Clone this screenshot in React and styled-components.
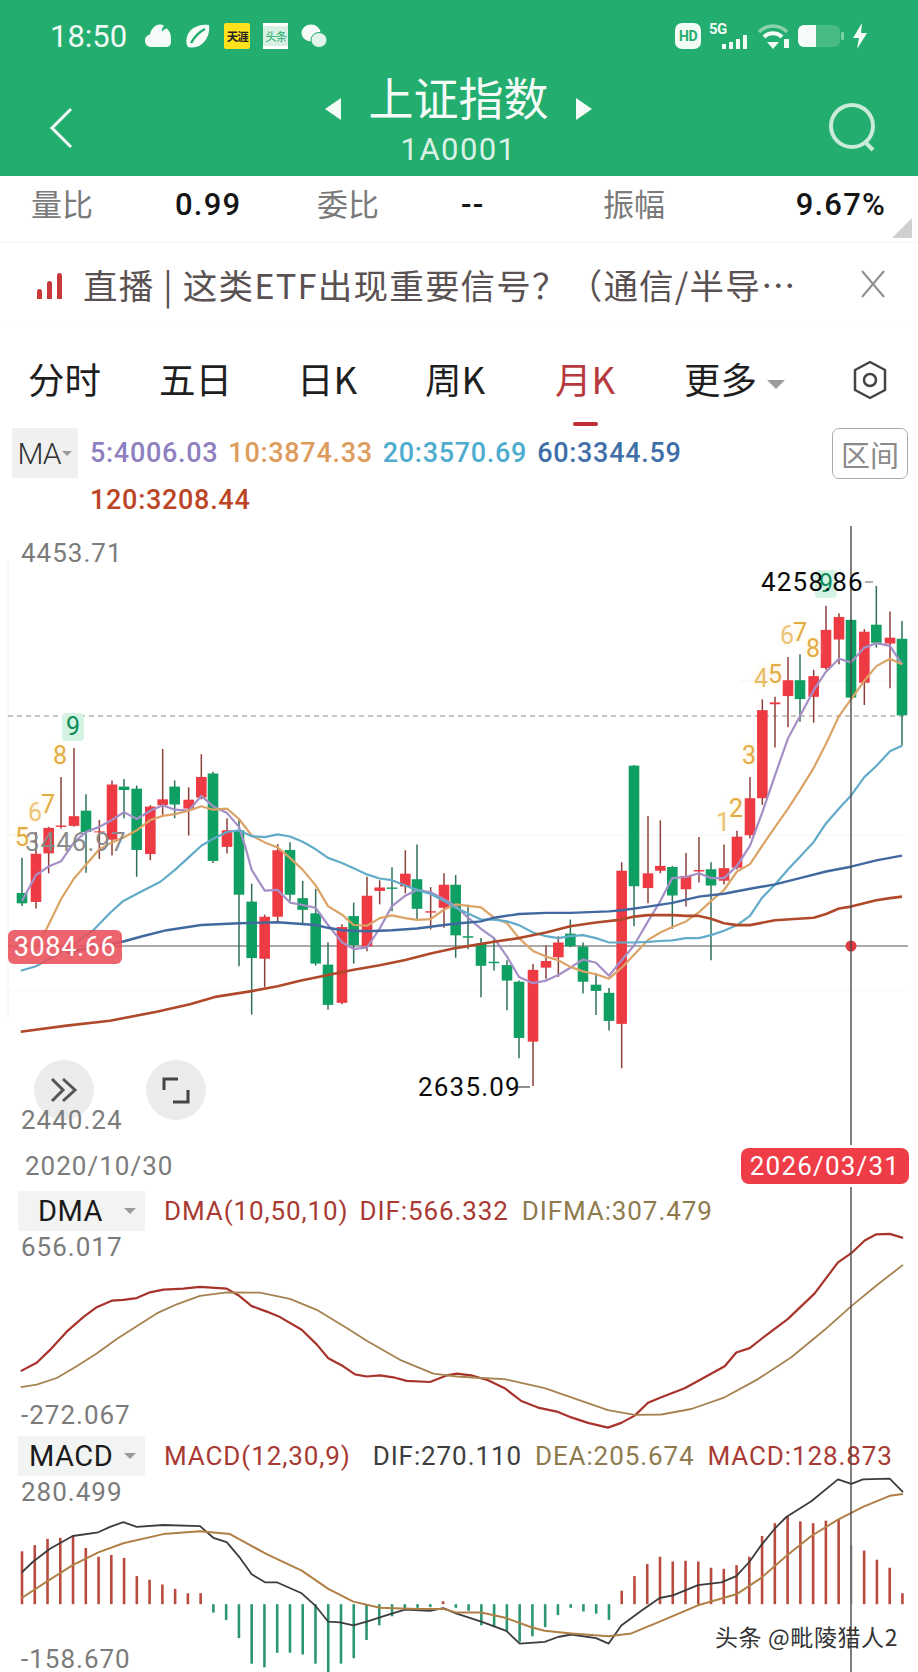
import React from "react";
import styled, { createGlobalStyle } from "styled-components";

const GlobalStyle = createGlobalStyle`
  html, body { margin: 0; padding: 0; background: #fff; }
  body { font-family: Roboto, "Noto Sans CJK SC", sans-serif; }
`;

const CJK = `"Noto Sans CJK SC", Roboto, sans-serif`;

// the zoom crops were read off in their own scale, these bring them back to page pixels
const xL = (z) => z / 3;
const xR = (z) => 458 + z / 3;
const yL = (z) => 560 + z / 2.904;
const yR = (z) => 520 + z / 2.703;
const yB = (z) => 1100 + z / 2.741;

const toPath = (...parts) =>
  parts
    .flatMap(([data, fx, fy]) => data.map(([x, y]) => `${fx(x).toFixed(1)},${fy(y).toFixed(1)}`))
    .join(" ");

const candlesLeft = [
  [66, 865, 967, 997, 1005, "g"], [108, 790, 853, 993, 1012, "r"], [146, 775, 778, 852, 910, "r"],
  [183, 630, 771, 775, 780, "r"], [222, 546, 744, 772, 775, "r"], [258, 680, 728, 790, 908, "g"],
  [298, 755, 788, 791, 868, "r"], [336, 640, 652, 812, 858, "r"], [372, 636, 658, 668, 750, "g"],
  [410, 655, 664, 842, 920, "g"], [451, 712, 716, 854, 872, "r"], [488, 549, 695, 712, 740, "r"],
  [524, 640, 658, 710, 750, "g"], [566, 660, 696, 722, 800, "r"], [604, 564, 630, 690, 695, "r"],
  [639, 615, 620, 874, 880, "g"], [681, 750, 785, 833, 852, "r"], [717, 750, 785, 972, 1180, "g"],
  [755, 940, 992, 1156, 1320, "g"], [794, 1030, 1036, 1158, 1240, "r"], [833, 825, 843, 1036, 1050, "r"],
  [870, 820, 842, 972, 990, "g"], [908, 932, 982, 1016, 1058, "g"], [947, 955, 1026, 1172, 1178, "g"],
  [984, 1110, 1175, 1292, 1305, "g"], [1026, 1058, 1066, 1286, 1290, "r"], [1061, 995, 1034, 1118, 1172, "g"],
  [1101, 920, 975, 1122, 1136, "r"], [1139, 930, 951, 961, 1000, "r"], [1176, 892, 951, 955, 1020, "g"],
  [1216, 843, 911, 948, 968, "r"], [1251, 826, 927, 1013, 1046, "g"], [1292, 950, 1020, 1024, 1073, "r"],
  [1332, 910, 943, 1010, 1068, "r"], [1367, 915, 943, 1090, 1155, "g"],
];

const candlesRight = [
  [30, 1040, 1125, 1129, 1160, "g"], [69, 1130, 1145, 1205, 1290, "g"], [108, 1130, 1194, 1198, 1218, "g"],
  [147, 1190, 1203, 1245, 1325, "g"], [183, 1245, 1248, 1400, 1455, "g"], [225, 1200, 1216, 1410, 1530, "r"],
  [264, 1150, 1192, 1210, 1240, "r"], [301, 1125, 1142, 1182, 1235, "r"], [337, 1080, 1118, 1152, 1155, "g"],
  [375, 1142, 1153, 1248, 1280, "g"], [414, 1225, 1256, 1273, 1338, "g"], [453, 1265, 1278, 1354, 1380, "g"],
  [491, 925, 948, 1362, 1482, "r"], [528, 662, 664, 990, 1098, "g"], [570, 800, 955, 995, 1036, "r"],
  [607, 812, 935, 948, 955, "r"], [643, 935, 938, 1015, 1105, "g"], [684, 900, 962, 998, 1045, "r"],
  [723, 857, 946, 950, 980, "r"], [759, 925, 944, 988, 1190, "g"], [798, 877, 941, 975, 985, "r"],
  [837, 840, 856, 940, 945, "r"], [876, 695, 752, 852, 860, "r"], [913, 485, 514, 752, 770, "r"],
  [951, 478, 493, 498, 615, "r"], [990, 370, 433, 476, 560, "r"], [1026, 363, 433, 484, 545, "g"],
  [1067, 405, 422, 478, 548, "r"], [1104, 232, 297, 400, 405, "r"], [1143, 252, 262, 323, 390, "r"],
  [1179, 268, 270, 480, 482, "g"], [1219, 295, 302, 440, 500, "r"], [1255, 178, 283, 332, 345, "g"],
  [1296, 247, 318, 334, 455, "r"], [1332, 273, 321, 528, 610, "g"],
];

const allCandles = [
  ...candlesLeft.map(([x, a, b, c, d, col]) => ({ x: xL(x), a: yL(a), b: yL(b), c: yL(c), d: yL(d), col })),
  ...candlesRight.map(([x, a, b, c, d, col]) => ({ x: xR(x), a: yR(a), b: yR(b), c: yR(c), d: yR(d), col })),
];

const maLines = [
  {
    color: "#a48fc6", width: 2.2,
    points: toPath(
      [[[66, 990], [108, 915], [146, 890], [183, 875], [222, 820], [258, 790], [298, 775], [336, 755], [372, 732], [410, 752], [451, 728], [488, 712], [524, 725], [566, 728], [604, 685], [639, 715], [681, 735], [717, 775], [735, 830], [755, 900], [794, 960], [833, 958], [870, 995], [908, 1002], [947, 1010], [984, 1060], [1026, 1110], [1061, 1130], [1101, 1125], [1139, 1070], [1176, 1005], [1216, 975], [1251, 958], [1292, 965], [1332, 985], [1367, 1005]], xL, yL],
      [[[30, 1075], [69, 1105], [108, 1130], [147, 1180], [183, 1235], [225, 1252], [264, 1245], [301, 1230], [337, 1210], [375, 1188], [414, 1197], [453, 1232], [491, 1190], [528, 1150], [570, 1085], [607, 1030], [643, 968], [684, 965], [723, 955], [759, 968], [798, 968], [837, 935], [876, 880], [913, 790], [951, 690], [990, 590], [1026, 530], [1067, 460], [1104, 410], [1143, 375], [1179, 385], [1219, 345], [1255, 333], [1296, 340], [1332, 390]], xR, yR]
    ),
  },
  {
    color: "#dba366", width: 2.2,
    points: toPath(
      [[[108, 1125], [140, 1070], [183, 985], [222, 925], [258, 885], [298, 840], [336, 820], [372, 805], [410, 785], [451, 755], [488, 743], [524, 738], [566, 728], [604, 715], [639, 725], [681, 722], [717, 752], [755, 800], [794, 820], [833, 835], [870, 865], [908, 900], [947, 945], [984, 1005], [1026, 1030], [1061, 1060], [1101, 1062], [1139, 1040], [1176, 1032], [1216, 1040], [1251, 1045], [1292, 1043], [1332, 1015], [1367, 1000]], xL, yL],
      [[[69, 1047], [108, 1075], [147, 1090], [183, 1130], [225, 1165], [264, 1180], [301, 1190], [337, 1208], [375, 1220], [414, 1228], [453, 1240], [491, 1210], [528, 1175], [570, 1135], [607, 1115], [643, 1100], [684, 1085], [723, 1060], [759, 1030], [798, 1000], [837, 950], [876, 930], [913, 880], [951, 830], [990, 780], [1026, 730], [1067, 670], [1104, 605], [1143, 530], [1179, 485], [1219, 435], [1255, 395], [1296, 375], [1332, 390]], xR, yR]
    ),
  },
  {
    color: "#62abc9", width: 2.2,
    points: toPath(
      [[[62, 1193], [108, 1180], [200, 1130], [280, 1075], [330, 1025], [370, 990], [430, 960], [480, 935], [525, 900], [570, 860], [604, 830], [639, 810], [681, 790], [717, 785], [755, 802], [794, 805], [833, 797], [870, 803], [908, 818], [947, 840], [984, 865], [1026, 880], [1061, 895], [1101, 913], [1139, 925], [1176, 930], [1216, 945], [1251, 958], [1292, 970], [1332, 990], [1367, 1010]], xL, yL],
      [[[69, 1080], [108, 1080], [147, 1085], [183, 1095], [225, 1115], [264, 1125], [301, 1130], [337, 1125], [375, 1122], [414, 1130], [453, 1142], [491, 1142], [528, 1142], [570, 1140], [607, 1138], [643, 1136], [684, 1130], [723, 1130], [759, 1122], [798, 1110], [837, 1095], [876, 1070], [913, 1020], [951, 985], [990, 945], [1026, 910], [1067, 870], [1104, 820], [1143, 780], [1179, 745], [1219, 695], [1255, 665], [1296, 625], [1332, 610]], xR, yR]
    ),
  },
  {
    color: "#41699f", width: 2.4,
    points: toPath(
      [[[200, 1140], [370, 1108], [430, 1092], [500, 1075], [604, 1060], [717, 1055], [833, 1052], [947, 1060], [984, 1068], [1026, 1075], [1101, 1078], [1176, 1075], [1251, 1070], [1332, 1060], [1380, 1055]], xL, yL],
      [[[69, 1085], [108, 1075], [183, 1065], [264, 1062], [337, 1062], [453, 1058], [491, 1055], [570, 1045], [643, 1035], [723, 1018], [798, 1010], [876, 997], [951, 985], [1026, 968], [1104, 950], [1179, 937], [1255, 920], [1332, 907]], xR, yR]
    ),
  },
  {
    color: "#b0492a", width: 2.6,
    points: toPath(
      [[[62, 1370], [200, 1352], [330, 1338], [470, 1312], [570, 1290], [650, 1268], [755, 1252], [833, 1238], [900, 1222], [984, 1205], [1061, 1190], [1139, 1177], [1216, 1162], [1292, 1143], [1367, 1127]], xL, yL],
      [[[108, 1140], [183, 1130], [264, 1115], [337, 1098], [414, 1088], [491, 1080], [528, 1072], [570, 1068], [643, 1068], [684, 1070], [723, 1070], [759, 1078], [798, 1090], [837, 1095], [876, 1095], [951, 1082], [1067, 1075], [1104, 1065], [1143, 1050], [1179, 1045], [1255, 1028], [1296, 1022], [1332, 1018]], xR, yR]
    ),
  },
];

const dmaLines = [
  {
    color: "#a8332b", width: 2.2,
    points: toPath(
      [[[62, 743], [110, 720], [150, 685], [200, 635], [250, 595], [290, 568], [335, 550], [370, 548], [410, 543], [450, 527], [490, 520], [550, 517], [600, 512], [680, 517], [715, 535], [755, 565], [800, 580], [840, 595], [905, 630], [950, 670], [985, 708], [1030, 730], [1065, 752], [1100, 758], [1140, 755], [1180, 760], [1220, 770], [1290, 773], [1340, 755], [1370, 750]], xL, yB],
      [[[40, 755], [90, 768], [140, 790], [190, 825], [240, 843], [300, 855], [340, 870], [390, 885], [450, 898], [490, 885], [530, 865], [570, 830], [610, 815], [680, 790], [740, 760], [800, 730], [835, 692], [875, 680], [910, 655], [990, 600], [1070, 530], [1140, 445], [1180, 420], [1220, 385], [1255, 368], [1295, 367], [1335, 378]], xR, yB]
    ),
  },
  {
    color: "#a5824f", width: 1.8,
    points: toPath(
      [[[62, 787], [110, 780], [170, 762], [230, 730], [290, 695], [350, 655], [410, 620], [470, 585], [530, 560], [600, 537], [680, 527], [780, 528], [870, 545], [950, 575], [1040, 625], [1100, 660], [1200, 712], [1300, 750], [1370, 758]], xL, yB],
      [[[70, 762], [140, 765], [260, 790], [340, 815], [450, 850], [530, 863], [610, 862], [700, 847], [800, 815], [900, 765], [1000, 705], [1100, 630], [1180, 565], [1260, 505], [1335, 452]], xR, yB]
    ),
  },
];

const macdLines = [
  {
    color: "#3c3c3c", width: 1.8,
    points: toPath(
      [[[65, 1295], [100, 1265], [150, 1230], [218, 1195], [295, 1185], [330, 1170], [370, 1157], [410, 1170], [490, 1165], [600, 1168], [640, 1200], [680, 1212], [720, 1255], [755, 1300], [795, 1322], [830, 1322], [905, 1352], [945, 1385], [985, 1430], [1020, 1432], [1060, 1440], [1100, 1430], [1175, 1408], [1215, 1397], [1290, 1400], [1330, 1393], [1370, 1408]], xL, yB],
      [[[70, 1430], [145, 1455], [185, 1490], [260, 1485], [300, 1472], [340, 1465], [414, 1475], [452, 1490], [490, 1440], [550, 1400], [605, 1365], [645, 1358], [720, 1330], [790, 1322], [835, 1305], [875, 1265], [910, 1220], [950, 1175], [985, 1143], [1060, 1100], [1140, 1040], [1180, 1052], [1215, 1040], [1295, 1038], [1335, 1075]], xR, yB]
    ),
  },
  {
    color: "#b07f45", width: 2,
    points: toPath(
      [[[65, 1365], [140, 1320], [218, 1275], [295, 1240], [370, 1215], [490, 1190], [600, 1182], [690, 1190], [800, 1245], [905, 1290], [985, 1340], [1060, 1375], [1140, 1392], [1250, 1395], [1330, 1395], [1370, 1405]], xL, yB],
      [[[70, 1405], [145, 1420], [220, 1445], [260, 1455], [340, 1462], [452, 1470], [520, 1462], [605, 1430], [720, 1385], [835, 1355], [910, 1310], [985, 1250], [1060, 1195], [1140, 1150], [1215, 1115], [1295, 1085], [1335, 1080]], xR, yB]
    ),
  },
];

// bar ends of the MACD histogram, one for each month, in crop units
const macdBars = [
  1237, 1220, 1203, 1200, 1197, 1228, 1252, 1247, 1255, 1305, 1315, 1328, 1340, 1352, 1352,
  1405, 1425, 1475, 1545, 1555, 1515, 1515, 1520, 1545, 1572, 1545, 1530, 1480, 1440, 1415,
  1394, 1392, 1390, 1374, 1392, 1400, 1440, 1445, 1455, 1485, 1470, 1445, 1412, 1392, 1402,
  1408, 1425, 1345, 1305, 1272, 1252, 1265, 1263, 1265, 1282, 1285, 1275, 1252, 1195, 1160,
  1140, 1155, 1160, 1153, 1150, 1220, 1235, 1260, 1282, 1352,
];
const zeroZ = 1382;

const Page = styled.div`
  width: 918px;
  height: 1672px;
  overflow: hidden;
  background: #fff;
  display: flex;
  flex-direction: column;
`;

const GreenHeader = styled.header`
  height: 176px;
  background: #23ad6e;
  color: #fff;
  display: flex;
  flex-direction: column;
`;

const StatusBar = styled.div`
  height: 72px;
  padding: 0 50px 0 50px;
  display: flex;
  align-items: center;
  justify-content: space-between;
`;

const StatusGroup = styled.div`
  display: flex;
  align-items: center;
  gap: ${(p) => p.$gap || 13}px;
`;

const Clock = styled.span`
  font-family: Roboto, sans-serif;
  font-weight: 400;
  font-size: 31px;
  color: #eef9f3;
  margin-right: 5px;
`;

const YellowBadge = styled.span`
  width: 26px;
  height: 26px;
  background: #ffe21c;
  color: #222;
  border-radius: 2px;
  font-family: ${CJK};
  font-weight: 700;
  font-size: 11.5px;
  letter-spacing: -1px;
  display: flex;
  align-items: center;
  justify-content: center;
`;

const PaperBadge = styled.span`
  width: 25px;
  height: 26px;
  background: #d9f0e4;
  color: #23ad6e;
  border-top: 3px solid #fff;
  border-bottom: 3px solid #fff;
  box-sizing: border-box;
  font-family: ${CJK};
  font-size: 11.5px;
  letter-spacing: -1px;
  display: flex;
  align-items: center;
  justify-content: center;
`;

const HdBadge = styled.span`
  width: 26px;
  height: 26px;
  background: #f3fbf6;
  color: #23ad6e;
  border-radius: 7px;
  font-weight: 700;
  font-size: 14px;
  letter-spacing: -0.5px;
  display: flex;
  align-items: center;
  justify-content: center;
`;

const FiveG = styled.span`
  position: relative;
  width: 39px;
  height: 26px;
  font-size: 15px;
  font-weight: 700;
  line-height: 13px;
  letter-spacing: -0.5px;
  color: #f3fbf6;
`;

const NavBar = styled.div`
  flex: 1;
  padding: 0 40px 0 49px;
  display: flex;
  align-items: flex-start;
  justify-content: space-between;
`;

const BackSlot = styled.div`
  width: 24px;
  height: 42px;
  margin-top: 35px;
`;

const SearchSlot = styled.div`
  width: 50px;
  height: 50px;
  margin-top: 30px;
`;

const TitleBlock = styled.div`
  display: flex;
  flex-direction: column;
  align-items: center;
  margin-left: 16px;
  margin-top: -2px;
`;

const TitleLine = styled.div`
  display: flex;
  align-items: center;
  gap: 27px;
  height: 54px;
`;

const Title = styled.h1`
  margin: 0;
  font-family: ${CJK};
  font-weight: 400;
  font-size: 45px;
  line-height: 54px;
  color: #f5fcf8;
`;

const Code = styled.div`
  font-family: Roboto, sans-serif;
  font-size: 31px;
  font-weight: 400;
  line-height: 36px;
  letter-spacing: 1.4px;
  margin-top: 8px;
  color: #d9f2e5;
`;

const ArrowLeft = styled.span`
  margin-top: 24px;
  width: 0;
  height: 0;
  border-top: 11px solid transparent;
  border-bottom: 11px solid transparent;
  border-right: 16px solid #f5fcf8;
`;

const ArrowRight = styled(ArrowLeft)`
  border-right: 0;
  border-left: 16px solid #f5fcf8;
`;

const StatsRow = styled.div`
  position: relative;
  height: 67px;
  padding: 0 32px 0 31px;
  display: grid;
  grid-template-columns: 144px 142px 144px 142px 192px 1fr;
  align-items: start;
  border-bottom: 1px solid #f4f4f4;
  box-sizing: border-box;
`;

const StatName = styled.span`
  font-family: ${CJK};
  font-size: 31px;
  line-height: 40px;
  margin-top: 7px;
  color: #7a7a7a;
`;

const StatValue = styled.span`
  font-family: Roboto, sans-serif;
  font-weight: 500;
  font-size: 31px;
  line-height: 40px;
  letter-spacing: 1.2px;
  margin-top: 9px;
  color: #151515;
  text-align: ${(p) => (p.$end ? "right" : "left")};
`;

const CornerMark = styled.span`
  position: absolute;
  right: 6px;
  top: 42px;
  width: 0;
  height: 0;
  border-left: 20px solid transparent;
  border-bottom: 20px solid #cfcfcf;
`;

const Banner = styled.div`
  height: 83px;
  padding: 0 32px 0 37px;
  display: flex;
  align-items: center;
  border-bottom: 1px solid #fbfbfb;
  box-sizing: border-box;
`;

const BannerBars = styled.span`
  display: flex;
  align-items: flex-end;
  gap: 5px;
  height: 26px;
  margin: 4px 21px 0 0;
`;

const BannerBar = styled.i`
  width: 5px;
  height: ${(p) => p.$h}px;
  background: #c8383a;
  border-radius: 3px 3px 0 0;
`;

const BannerText = styled.span`
  flex: 1;
  font-family: ${CJK};
  font-size: 34.5px;
  line-height: 40px;
  letter-spacing: 1.2px;
  color: #5a5152;
  white-space: nowrap;
`;

const Tabs = styled.nav`
  height: 99px;
  padding: 0 30px 0 28px;
  display: grid;
  grid-template-columns: 131px 138px 128px 130px 129px 1fr auto;
  align-items: center;
  box-sizing: border-box;
`;

const Tab = styled.span`
  position: relative;
  font-family: ${CJK};
  font-size: 36.5px;
  line-height: 44px;
  margin-top: 7px;
  color: ${(p) => (p.$active ? "#b5393d" : "#1f1f1f")};
`;

const TabMark = styled.i`
  position: absolute;
  left: 18px;
  top: 65px;
  width: 25px;
  height: 4px;
  background: #c22f36;
  border-radius: 2px;
`;

const SettingsIcon = styled.svg`
  margin-top: 8px;
`;

const Caret = styled.i`
  display: inline-block;
  vertical-align: middle;
  margin-left: ${(p) => p.$ml ?? 10}px;
  width: 0;
  height: 0;
  border-left: ${(p) => p.$s || 9}px solid transparent;
  border-right: ${(p) => p.$s || 9}px solid transparent;
  border-top: ${(p) => p.$s || 9}px solid #9a9a9a;
`;

const IndicatorBar = styled.div`
  height: 101px;
  padding: 3px 10px 0 12px;
  display: flex;
  align-items: flex-start;
  box-sizing: border-box;
`;

const MaPicker = styled.span`
  width: 66px;
  height: 50px;
  background: #f0f0f0;
  font-family: Roboto, sans-serif;
  font-size: 30px;
  font-weight: 300;
  color: #333;
  display: flex;
  align-items: center;
  justify-content: center;
  letter-spacing: -1px;
  flex-shrink: 0;
`;

const MaValues = styled.div`
  width: 740px;
  margin-left: 12px;
  padding-top: 5px;
  display: flex;
  flex-wrap: wrap;
  column-gap: 10px;
  row-gap: 6px;
`;

const MaValue = styled.span`
  font-family: Roboto, sans-serif;
  font-weight: 500;
  font-size: 27px;
  line-height: 41px;
  letter-spacing: 0.7px;
  color: ${(p) => p.$color};
`;

const RangeButton = styled.span`
  margin-left: auto;
  width: 76px;
  height: 51px;
  box-sizing: border-box;
  border: 1.5px solid #aaa;
  border-radius: 7px;
  font-family: ${CJK};
  font-size: 29px;
  color: #8a8a8a;
  display: flex;
  align-items: center;
  justify-content: center;
`;

const ChartArea = styled.section`
  position: relative;
  flex: 1;
`;

const ChartSvg = styled.svg`
  position: absolute;
  inset: 0;
`;

const Panel = styled.div`
  position: relative;
  height: ${(p) => p.$h}px;
`;

const AxisValue = styled.span`
  position: absolute;
  left: ${(p) => p.$x || 21}px;
  top: ${(p) => p.$y + 3}px;
  font-family: Roboto, sans-serif;
  font-size: 26px;
  line-height: 24px;
  letter-spacing: 1px;
  color: ${(p) => p.$color || "#7b7b7b"};
`;

const PriceTag = styled.span`
  position: absolute;
  left: 8px;
  top: 404px;
  width: 114px;
  height: 34px;
  background: rgba(233, 80, 90, 0.88);
  border-radius: 6px;
  color: #fff;
  font-family: Roboto, sans-serif;
  font-size: 27px;
  letter-spacing: 0.6px;
  display: flex;
  align-items: center;
  justify-content: center;
`;

const SeqNum = styled.span`
  position: absolute;
  left: ${(p) => p.$x}px;
  top: ${(p) => p.$y}px;
  transform: translate(-50%, -50%);
  font-family: Roboto, sans-serif;
  font-size: 25px;
  line-height: 28px;
  padding: 0 4px;
  border-radius: 4px;
  color: ${(p) => (p.$nine ? "#0e8d5c" : "#e3ac42")};
  background: ${(p) => (p.$nine ? "#d5f3e3" : "transparent")};
  text-shadow: ${(p) => (p.$nine ? "none" : "0 0 6px #fdecc4")};
  opacity: ${(p) => p.$fade || 1};
`;

const ExtremeLabel = styled.span`
  position: absolute;
  left: ${(p) => p.$x}px;
  top: ${(p) => p.$y}px;
  font-family: Roboto, sans-serif;
  font-size: 26px;
  line-height: 30px;
  letter-spacing: 1.2px;
  color: #0a0a0a;
  white-space: nowrap;
`;

const CircleButton = styled.span`
  position: absolute;
  left: ${(p) => p.$x}px;
  top: 534px;
  width: 60px;
  height: 60px;
  border-radius: 50%;
  background: #ececec;
  display: flex;
  align-items: center;
  justify-content: center;
`;

const DateTag = styled.span`
  position: absolute;
  right: 9px;
  top: 0;
  width: 168px;
  height: 36px;
  background: #ee3d47;
  border-radius: 8px;
  box-shadow: 0 0 0 3px #fff;
  color: #fff;
  font-family: Roboto, sans-serif;
  font-size: 26px;
  letter-spacing: 1.2px;
  display: flex;
  align-items: center;
  justify-content: center;
`;

const Legend = styled.div`
  display: flex;
  align-items: center;
  padding-left: 18px;
  height: 40px;
`;

const Picker = styled.span`
  width: 127px;
  height: 40px;
  box-sizing: border-box;
  padding: 0 9px 0 ${(p) => p.$pad}px;
  background: #f2f3f3;
  border-radius: 2px;
  font-family: Roboto, sans-serif;
  font-size: 29px;
  letter-spacing: 0.5px;
  color: #1a1a1a;
  display: flex;
  align-items: center;
  justify-content: space-between;
  margin-right: 19px;
`;

const LegendItem = styled.span`
  font-family: Roboto, sans-serif;
  font-size: 26px;
  letter-spacing: 0.9px;
  margin-right: ${(p) => p.$gap}px;
  white-space: nowrap;
  color: ${(p) => p.$color};
`;

const Watermark = styled.span`
  position: absolute;
  left: 715px;
  top: 1095px;
  font-family: ${CJK};
  font-size: 23px;
  line-height: 30px;
  letter-spacing: 0.6px;
  color: #333;
  white-space: nowrap;
`;

const StatusIcons = {
  Cloud: () => (
    <svg width="26" height="24" viewBox="0 0 26 24">
      <path d="M6 23C2 23 0 20 0 16.500C0 13 2.500 11 5 10.500C6 5 10 0.500 15 0.500C17 0.500 18 1 19 2C17 4 16.500 6 17 8C18 6 20 4.500 22 4.500C24.500 7 26 10 26 14V18C26 21 24 23 21 23Z" fill="#f7fcf9" />
    </svg>
  ),
  Leaf: () => (
    <svg width="27" height="26" viewBox="0 0 27 26">
      <path d="M4 24C1 20 2 11 8 6C13 2 20 1 25 2C26 8 24 16 18 21C13 25 8 25 4 24Z" fill="#f7fcf9" />
      <path d="M7 20C11 13 15 9 21 6" stroke="#23ad6e" strokeWidth="2.500" fill="none" />
    </svg>
  ),
  Wechat: () => (
    <svg width="26" height="24" viewBox="0 0 26 24">
      <ellipse cx="10" cy="9" rx="9.500" ry="8.500" fill="#f7fcf9" />
      <ellipse cx="18" cy="16" rx="8" ry="7.500" fill="#e2f5eb" stroke="#23ad6e" strokeWidth="1" />
    </svg>
  ),
  Signal: () => (
    <svg width="26" height="14" viewBox="0 0 26 14" style={{ position: "absolute", right: 0, bottom: 0 }}>
      {[[0, 9], [7, 7], [14, 4], [21, 0]].map(([x, y]) => (
        <rect key={x} x={x} y={y} width="4" height={14 - y} fill="#f3fbf6" />
      ))}
    </svg>
  ),
  Wifi: () => (
    <svg width="34" height="26" viewBox="0 0 34 26">
      <path d="M3 9C11 1 23 1 31 9" stroke="#8bd3ad" strokeWidth="3.500" fill="none" />
      <path d="M8 14C13 9 21 9 26 14" stroke="#f3fbf6" strokeWidth="4" fill="none" />
      <path d="M11 19H23L17 26Z" fill="#f3fbf6" />
      <rect x="28" y="16" width="5" height="9" fill="#f3fbf6" />
    </svg>
  ),
  Battery: () => (
    <svg width="46" height="22" viewBox="0 0 46 22">
      <rect x="0" y="0" width="42" height="22" rx="6" fill="#48ba84" />
      <path d="M6 0H18V22H6A6 6 0 0 1 0 16V6A6 6 0 0 1 6 0Z" fill="#f7fcf9" />
      <rect x="43" y="7" width="3" height="8" rx="1" fill="#7fcfa6" />
    </svg>
  ),
  Bolt: () => (
    <svg width="16" height="26" viewBox="0 0 16 26">
      <path d="M10 0L1 15H7L5 26L15 10H9Z" fill="#f7fcf9" />
    </svg>
  ),
};

const PriceChart = () => (
  <g>
    <line x1="8" y1="560" x2="8" y2="1020" stroke="#f2f2f2" />
    <line x1="8" y1="835" x2="908" y2="835" stroke="#f4f4f4" />
    <line x1="8" y1="990" x2="908" y2="990" stroke="#f8f8f8" />
    <line x1="740" y1="681" x2="908" y2="681" stroke="#f4f4f4" />
    <line x1="8" y1="716" x2="908" y2="716" stroke="#b5b3a6" strokeWidth="1.400" strokeDasharray="5 4" />
    <line x1="8" y1="946" x2="908" y2="946" stroke="#555" strokeWidth="1.200" />
    {allCandles.map((c, i) => (
      <g key={i}>
        <line x1={c.x} y1={c.a} x2={c.x} y2={c.d} stroke={c.col === "r" ? "#8c3f39" : "#2f705a"} strokeWidth="1.500" />
        <rect x={c.x - 5.300} y={c.b} width="10.600" height={c.c - c.b} fill={c.col === "r" ? "#ee3a43" : "#0f9f63"} />
      </g>
    ))}
    {maLines.map((l) => (
      <polyline key={l.color} points={l.points} fill="none" stroke={l.color} strokeWidth={l.width} strokeLinejoin="round" />
    ))}
    <circle cx="851" cy="946" r="5.500" fill="#dd3a42" />
    <line x1="865" y1="582" x2="873" y2="582" stroke="#777" strokeWidth="1.200" />
    <line x1="518" y1="1087" x2="530" y2="1087" stroke="#444" strokeWidth="1.200" />
  </g>
);

const IndicatorCharts = () => (
  <g>
    {macdBars.map((z, i) => {
      const red = z < zeroZ;
      return (
        <line
          key={i}
          x1={22 + 12.76 * i}
          x2={22 + 12.76 * i}
          y1={yB(zeroZ)}
          y2={yB(z)}
          stroke={i === 65 ? "#d9cfcd" : red ? "#b94b3e" : "#2b9770"}
          strokeWidth="2.600"
        />
      );
    })}
    {[...dmaLines, ...macdLines].map((l, i) => (
      <polyline key={i} points={l.points} fill="none" stroke={l.color} strokeWidth={l.width} strokeLinejoin="round" />
    ))}
  </g>
);

const seqNumbers = [
  { n: 5, x: 22, y: 312 }, { n: 6, x: 35, y: 287, fade: 0.7 }, { n: 7, x: 48, y: 279 }, { n: 8, x: 60, y: 230 },
  { n: 9, x: 73, y: 201, nine: true }, { n: 1, x: 723, y: 297, fade: 0.75 }, { n: 2, x: 736, y: 283 },
  { n: 3, x: 749, y: 230 }, { n: 4, x: 761, y: 153, fade: 0.8 }, { n: 5, x: 775, y: 149 }, { n: 6, x: 787, y: 110, fade: 0.7 },
  { n: 7, x: 800, y: 107 }, { n: 8, x: 813, y: 123 }, { n: 9, x: 826, y: 58, nine: true },
];

export default function App() {
  return (
    <Page>
      <GlobalStyle />
      <GreenHeader>
        <StatusBar>
          <StatusGroup>
            <Clock>18:50</Clock>
            <StatusIcons.Cloud />
            <StatusIcons.Leaf />
            <YellowBadge>天涯</YellowBadge>
            <PaperBadge>头条</PaperBadge>
            <StatusIcons.Wechat />
          </StatusGroup>
          <StatusGroup $gap={8}>
            <HdBadge>HD</HdBadge>
            <FiveG>
              5G
              <StatusIcons.Signal />
            </FiveG>
            <StatusIcons.Wifi />
            <StatusIcons.Battery />
            <StatusIcons.Bolt />
          </StatusGroup>
        </StatusBar>
        <NavBar>
          <BackSlot>
            <svg width="24" height="42" viewBox="0 0 24 42">
              <path d="M22 2L3 21L22 40" fill="none" stroke="#f3fbf6" strokeWidth="3" />
            </svg>
          </BackSlot>
          <TitleBlock>
            <TitleLine>
              <ArrowLeft />
              <Title>上证指数</Title>
              <ArrowRight />
            </TitleLine>
            <Code>1A0001</Code>
          </TitleBlock>
          <SearchSlot>
            <svg width="50" height="50" viewBox="0 0 50 50">
              <circle cx="24" cy="24" r="21" fill="none" stroke="#c9ebd9" strokeWidth="4" />
              <path d="M36 39L45 48" stroke="#c9ebd9" strokeWidth="4" />
            </svg>
          </SearchSlot>
        </NavBar>
      </GreenHeader>

      <StatsRow>
        <StatName>量比</StatName>
        <StatValue>0.99</StatValue>
        <StatName>委比</StatName>
        <StatValue>--</StatValue>
        <StatName>振幅</StatName>
        <StatValue $end>9.67%</StatValue>
        <CornerMark />
      </StatsRow>

      <Banner>
        <BannerBars>
          <BannerBar $h={10} />
          <BannerBar $h={18} />
          <BannerBar $h={26} />
        </BannerBars>
        <BannerText>直播 | 这类ETF出现重要信号？（通信/半导…</BannerText>
        <svg width="26" height="30" viewBox="0 0 26 30">
          <path d="M2 2L24 28M24 2L2 28" stroke="#8f8f8f" strokeWidth="2" />
        </svg>
      </Banner>

      <Tabs>
        <Tab>分时</Tab>
        <Tab>五日</Tab>
        <Tab>日K</Tab>
        <Tab>周K</Tab>
        <Tab $active>
          月K
          <TabMark />
        </Tab>
        <Tab>
          更多
          <Caret />
        </Tab>
        <SettingsIcon width="36" height="40" viewBox="0 0 36 40">
          <path d="M18 2L33 10V30L18 38L3 30V10Z" fill="none" stroke="#444" strokeWidth="2.500" strokeLinejoin="round" />
          <circle cx="18" cy="20" r="6" fill="none" stroke="#444" strokeWidth="2.500" />
        </SettingsIcon>
      </Tabs>

      <IndicatorBar>
        <MaPicker>
          MA
          <Caret $s={5} $ml={2} />
        </MaPicker>
        <MaValues>
          <MaValue $color="#8f7fc0">5:4006.03</MaValue>
          <MaValue $color="#dd9c5c">10:3874.33</MaValue>
          <MaValue $color="#4faccf">20:3570.69</MaValue>
          <MaValue $color="#3f6ea8">60:3344.59</MaValue>
          <MaValue $color="#bb4526">120:3208.44</MaValue>
        </MaValues>
        <RangeButton>区间</RangeButton>
      </IndicatorBar>

      <ChartArea>
        <ChartSvg width="918" height="1146" viewBox="0 526 918 1146">
          <PriceChart />
          <IndicatorCharts />
          <line x1="851" y1="526" x2="851" y2="1672" stroke="#444" strokeWidth="1.600" opacity="0.85" />
        </ChartSvg>

        <Panel $h={622}>
          <AxisValue $y={12}>4453.71</AxisValue>
          <AxisValue $x={25} $y={301} $color="#8a8a8a">3446.97</AxisValue>
          {seqNumbers.map((s, i) => (
            <SeqNum key={i} $x={s.x} $y={s.y} $nine={s.nine} $fade={s.fade}>{s.n}</SeqNum>
          ))}
          <ExtremeLabel $x={761} $y={41}>4258.86</ExtremeLabel>
          <ExtremeLabel $x={418} $y={546}>2635.09</ExtremeLabel>
          <PriceTag>3084.66</PriceTag>
          <CircleButton $x={34}>
            <svg width="30" height="26" viewBox="0 0 30 26">
              <path d="M3 2L14 13L3 24M14 2L26 13L14 24" fill="none" stroke="#555" strokeWidth="3" />
            </svg>
          </CircleButton>
          <CircleButton $x={146}>
            <svg width="30" height="30" viewBox="0 0 30 30">
              <path d="M3 15V4H17M27 15V27H12" fill="none" stroke="#444" strokeWidth="3" />
            </svg>
          </CircleButton>
          <AxisValue $y={579}>2440.24</AxisValue>
        </Panel>

        <Panel $h={43}>
          <AxisValue $x={25} $y={3}>2020/10/30</AxisValue>
          <DateTag>2026/03/31</DateTag>
        </Panel>

        <Legend>
          <Picker $pad={20}>
            DMA
            <Caret $s={6} />
          </Picker>
          <LegendItem $color="#a83a33" $gap={11}>DMA(10,50,10)</LegendItem>
          <LegendItem $color="#a83a33" $gap={13}>DIF:566.332</LegendItem>
          <LegendItem $color="#8f7a4e">DIFMA:307.479</LegendItem>
        </Legend>

        <Panel $h={205}>
          <AxisValue $y={1}>656.017</AxisValue>
          <AxisValue $y={169}>-272.067</AxisValue>
        </Panel>

        <Legend>
          <Picker $pad={11}>
            MACD
            <Caret $s={6} />
          </Picker>
          <LegendItem $color="#a83a33" $gap={22}>MACD(12,30,9)</LegendItem>
          <LegendItem $color="#3d3d3d" $gap={13}>DIF:270.110</LegendItem>
          <LegendItem $color="#8f7a4e" $gap={13}>DEA:205.674</LegendItem>
          <LegendItem $color="#a83a33">MACD:128.873</LegendItem>
        </Legend>

        <Panel $h={196}>
          <AxisValue $y={1}>280.499</AxisValue>
          <AxisValue $y={168}>-158.670</AxisValue>
        </Panel>

        <Watermark>头条 @毗陵猎人2</Watermark>
      </ChartArea>
    </Page>
  );
}
